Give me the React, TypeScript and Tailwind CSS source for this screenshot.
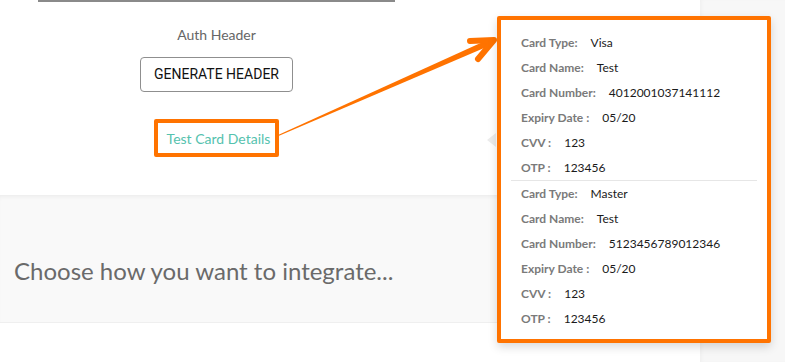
import React from "react";

const cards = [
  {
    id: 1,
    type: "Visa",
    name: "Test",
    number: "4012001037141112",
    expiry: "05/20",
    cvv: "123",
    otp: "123456",
  },
  {
    id: 2,
    type: "Master",
    name: "Test",
    number: "5123456789012346",
    expiry: "05/20",
    cvv: "123",
    otp: "123456",
  },
];

function Row({ label, value }: { label: string; value: string }) {
  return (
    <div className="h-[25px] flex items-center text-[12px] leading-none">
      <span className="font-bold text-[#7a7a7a] mr-[13px]">{label}</span>
      <span className="text-[#1a1a1a]">{value}</span>
    </div>
  );
}

export default function App() {
  return (
    <div className="relative w-[785px] h-[362px] overflow-hidden bg-white flex font-['Lato','Open_Sans',sans-serif]">
      {/* Main column */}
      <div className="w-[700px] flex flex-col">
        {/* Auth header panel */}
        <div className="h-[195px] w-[433px] flex flex-col items-center">
          <div className="w-[357px] h-[2px] bg-[#8a8a8a]" />
          <div className="mt-[25px] text-[14px] leading-[16px] text-[#666]">Auth Header</div>
          <button className="mt-[14px] w-[153px] h-[35px] rounded-[4px] border border-[#8f8f8f] bg-white text-[14px] text-[#111] font-['Roboto',sans-serif]">
            GENERATE HEADER
          </button>
          <div className="mt-[27px] w-[125px] h-[38px] border-[4px] border-[#ff7300] rounded-[2px] flex items-center justify-center">
            <span className="text-[14px] text-[#55c2ae] pl-[4px]">Test Card Details</span>
          </div>
        </div>

        {/* Integrate section */}
        <div className="h-[128px] bg-[#f9f9f9] border-t border-b border-[#efefef] shadow-[inset_0_3px_4px_-2px_rgba(0,0,0,0.05)] pl-[14px] pt-[61px]">
          <h2 className="text-[24px] leading-[28px] text-[#6a6a6a]">Choose how you want to integrate...</h2>
        </div>
      </div>

      {/* Right column */}
      <div className="flex-1 bg-[#f7f7f7] shadow-[inset_3px_0_4px_-2px_rgba(0,0,0,0.04)]" />

      {/* Popover caret */}
      <div className="absolute left-[487px] top-[133px] w-0 h-0 border-y-[7px] border-y-transparent border-r-[9px] border-r-[#ececec]" />

      {/* Arrow annotation */}
      <svg className="absolute left-0 top-0 pointer-events-none" width="785" height="362">
        <polygon points="277,135.6 277.3,136.6 489.4,45.8 486.6,40.2" fill="#ff7300" />
        <polyline
          points="470,41 494,40 478,59"
          fill="none"
          stroke="#ff7300"
          strokeWidth="6"
          strokeLinecap="round"
          strokeLinejoin="round"
        />
      </svg>

      {/* Test card popover */}
      <div className="absolute left-[497px] top-[16px] w-[274px] h-[327px] bg-white border-[4px] border-[#ff7300] rounded-[2px] shadow-[0_4px_10px_rgba(0,0,0,0.15)] px-[10px] pt-[10px]">
        {cards.map((card, index) => (
          <div key={card.id} className={`px-[10px] ${index === 0 ? "border-b border-[#e6e6e6]" : ""}`}>
            <Row label="Card Type:" value={card.type} />
            <Row label="Card Name:" value={card.name} />
            <Row label="Card Number:" value={card.number} />
            <Row label="Expiry Date :" value={card.expiry} />
            <Row label="CVV :" value={card.cvv} />
            <Row label="OTP :" value={card.otp} />
          </div>
        ))}
      </div>
    </div>
  );
}
